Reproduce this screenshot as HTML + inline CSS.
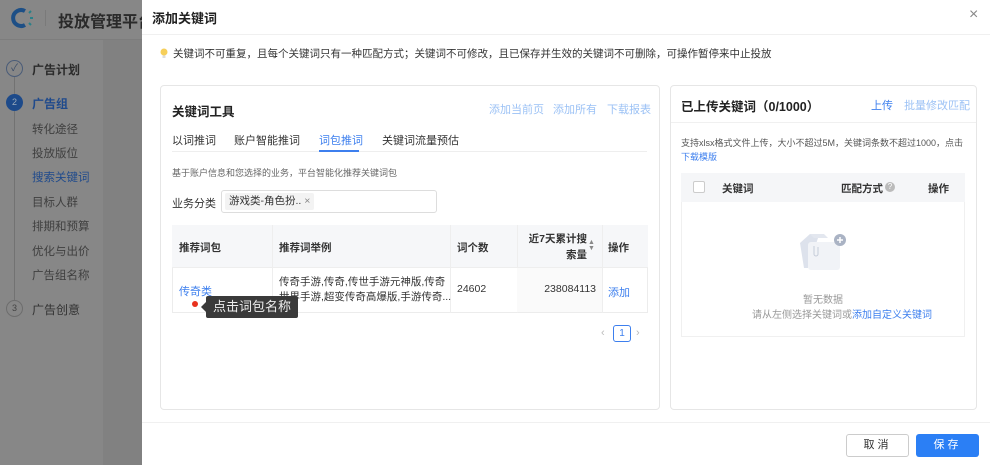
<!DOCTYPE html>
<html><head><meta charset="utf-8">
<style>
*{box-sizing:border-box;margin:0;padding:0}
body{width:990px;height:465px;overflow:hidden;position:relative;background:#808080;font-family:"Liberation Sans","Noto Sans CJK SC",sans-serif;color:#333}
.a{position:absolute;white-space:nowrap}
.side{position:absolute;left:0;top:0;width:103px;height:465px;background:#878787}
.main{position:absolute;left:103px;top:40px;width:40px;height:425px;background:#818181}
.hdr{position:absolute;left:0;top:0;width:142px;height:40px;background:#878787;border-bottom:1px solid #7d7d7d}
.st{color:#2b2b2b;font-size:12px}
.sub{color:#3f3f3f;font-size:11.5px;left:32px}
.drawer{position:absolute;left:142px;top:0;width:848px;height:465px;background:#fff}
.card{position:absolute;border:1px solid #e6e6e6;border-radius:4px;background:#fff}
.blue{color:#3d7fee}
.lb{color:#9cc2f5}
</style></head><body>
<div class="side"></div>
<div class="main"></div>
<div class="hdr"></div>
<svg class="a" style="left:10px;top:7px" width="26" height="22" viewBox="0 0 26 22">
<path d="M15 4 A8 8 0 1 0 15 18" stroke="#1d4f86" stroke-width="4" fill="none"/>
<g stroke="#2a8088" stroke-width="2"><path d="M19 6l2-2M20 11h3M19 16l2 2"/></g></svg>
<div class="a" style="left:45px;top:10px;width:1px;height:16px;background:#7a7a7a"></div>
<div class="a" style="left:58px;top:8px;font-size:16px;font-weight:bold;color:#2a2a2a">投放管理平台</div>
<div class="a" style="left:14px;top:68px;width:1px;height:240px;background:#727272"></div>
<div class="a" style="left:6px;top:60px;width:17px;height:17px;border-radius:50%;border:1px solid #4a5c78;background:#878787;color:#3a4c68;font-size:10px;text-align:center;line-height:15px">✓</div>
<div class="a st" style="left:32px;top:61px;font-weight:bold">广告计划</div>
<div class="a" style="left:6px;top:94px;width:17px;height:17px;border-radius:50%;background:#1d4a8a;color:#9ab;font-size:9px;text-align:center;line-height:17px">2</div>
<div class="a st" style="left:32px;top:95px;color:#1f4a8c;font-weight:bold">广告组</div>
<div class="a sub" style="top:121px">转化途径</div>
<div class="a sub" style="top:145px">投放版位</div>
<div class="a sub" style="top:169px;color:#1f4a8c">搜索关键词</div>
<div class="a sub" style="top:194px">目标人群</div>
<div class="a sub" style="top:218px">排期和预算</div>
<div class="a sub" style="top:243px">优化与出价</div>
<div class="a sub" style="top:267px">广告组名称</div>
<div class="a" style="left:6px;top:300px;width:17px;height:17px;border-radius:50%;border:1px solid #6d6d6d;background:#878787;color:#444;font-size:9px;text-align:center;line-height:15px">3</div>
<div class="a st" style="left:32px;top:301px;color:#333">广告创意</div>

<div class="drawer">
<div class="a" style="left:10px;top:8px;font-size:13px;font-weight:bold;color:#222">添加关键词</div>
<div class="a" style="left:827px;top:6px;font-size:16px;color:#888">×</div>
<div class="a" style="left:0;top:34px;width:848px;height:1px;background:#f0f0f0"></div>
<svg class="a" style="left:18px;top:48px" width="8" height="11" viewBox="0 0 8 11"><circle cx="4" cy="4" r="3.5" fill="#f6cf5a"/><rect x="2.5" y="7.5" width="3" height="2.5" fill="#ddd"/></svg>
<div class="a" style="left:31px;top:46px;font-size:10.5px;color:#333">关键词不可重复，且每个关键词只有一种匹配方式；关键词不可修改，且已保存并生效的关键词不可删除，可操作暂停来中止投放</div>

<div class="card" style="left:18px;top:85px;width:500px;height:325px"></div>
<div class="a" style="left:30px;top:101px;font-size:12.5px;font-weight:bold;color:#222">关键词工具</div>
<div class="a lb" style="left:347px;top:101px;font-size:11px">添加当前页</div>
<div class="a lb" style="left:411px;top:101px;font-size:11px">添加所有</div>
<div class="a lb" style="left:465px;top:101px;font-size:11px">下载报表</div>
<div class="a" style="left:30px;top:132px;font-size:11px">以词推词</div>
<div class="a" style="left:92px;top:132px;font-size:11px">账户智能推词</div>
<div class="a blue" style="left:177px;top:132px;font-size:11px">词包推词</div>
<div class="a" style="left:240px;top:132px;font-size:11px">关键词流量预估</div>
<div class="a" style="left:30px;top:151px;width:475px;height:1px;background:#eee"></div>
<div class="a" style="left:177px;top:150px;width:40px;height:2px;background:#3d7fee"></div>
<div class="a" style="left:30px;top:166px;font-size:9px;color:#666">基于账户信息和您选择的业务，平台智能化推荐关键词包</div>
<div class="a" style="left:30px;top:195px;font-size:11px">业务分类</div>
<div class="a" style="left:79px;top:190px;width:216px;height:23px;border:1px solid #ddd;border-radius:3px"></div>
<div class="a" style="left:83px;top:193px;height:17px;background:#f3f3f3;border-radius:2px;padding:0 4px;font-size:10.5px;line-height:17px">游戏类-角色扮.. <span style="color:#888">×</span></div>
<div class="a" style="left:30px;top:225px;width:476px;height:88px;border:1px solid #ececec"></div>
<div class="a" style="left:30px;top:225px;width:476px;height:43px;background:#f6f7f9;border-bottom:1px solid #eee"></div>
<div class="a" style="left:130px;top:225px;width:1px;height:88px;background:#eee"></div>
<div class="a" style="left:308px;top:225px;width:1px;height:88px;background:#eee"></div>
<div class="a" style="left:375px;top:225px;width:1px;height:88px;background:#eee"></div>
<div class="a" style="left:460px;top:225px;width:1px;height:88px;background:#eee"></div>
<div class="a" style="left:375px;top:268px;width:85px;height:44px;background:#fafafa"></div>
<div class="a" style="left:37px;top:240px;font-size:10.5px;font-weight:bold">推荐词包</div>
<div class="a" style="left:137px;top:240px;font-size:10.5px;font-weight:bold">推荐词举例</div>
<div class="a" style="left:315px;top:240px;font-size:10.5px;font-weight:bold">词个数</div>
<div class="a" style="left:385px;top:231px;font-size:10.5px;font-weight:bold;text-align:right;width:60px;line-height:16px;white-space:normal">近7天累计搜索量</div>
<div class="a" style="left:446px;top:240px;font-size:7px;color:#888;line-height:6px">▲<br>▼</div>
<div class="a" style="left:466px;top:240px;font-size:10.5px;font-weight:bold">操作</div>
<div class="a blue" style="left:37px;top:283px;font-size:11px">传奇类</div>
<div class="a" style="left:137px;top:275px;font-size:10.5px;line-height:15px">传奇手游,传奇,传世手游元神版,传奇<br>世界手游,超变传奇高爆版,手游传奇...</div>
<div class="a" style="left:315px;top:283px;font-size:10.5px">24602</div>
<div class="a" style="left:375px;top:283px;width:79px;text-align:right;font-size:10.5px">238084113</div>
<div class="a blue" style="left:466px;top:284px;font-size:11px">添加</div>
<div class="a" style="left:50px;top:301px;width:6px;height:6px;border-radius:50%;background:#e8321e"></div>
<div class="a" style="left:64px;top:296px;background:#3a3a3a;color:#eee;font-size:13px;padding:1px 7px;height:22px;line-height:20px;border-radius:2px">点击词包名称</div>
<div class="a" style="left:59px;top:302px;width:0;height:0;border:5px solid transparent;border-right-color:#3a3a3a;border-left:0"></div>
<div class="a" style="left:459px;top:327px;font-size:11px;color:#bbb">‹</div>
<div class="a blue" style="left:471px;top:325px;width:18px;height:17px;border:1px solid #3d7fee;border-radius:3px;font-size:10px;text-align:center;line-height:15px">1</div>
<div class="a" style="left:494px;top:327px;font-size:11px;color:#bbb">›</div>

<div class="card" style="left:528px;top:85px;width:307px;height:325px"></div>
<div class="a" style="left:539px;top:96px;font-size:12.5px;font-weight:bold;color:#222">已上传关键词（0/1000）</div>
<div class="a blue" style="left:729px;top:97px;font-size:11px">上传</div>
<div class="a lb" style="left:762px;top:97px;font-size:11px">批量修改匹配</div>
<div class="a" style="left:529px;top:122px;width:305px;height:1px;background:#f0f0f0"></div>
<div class="a" style="left:539px;top:136px;font-size:9px;color:#555">支持xlsx格式文件上传，大小不超过5M，关键词条数不超过1000，点击</div>
<div class="a blue" style="left:539px;top:150px;font-size:9px">下载模版</div>
<div class="a" style="left:539px;top:173px;width:284px;height:164px;border:1px solid #f0f0f0"></div>
<div class="a" style="left:539px;top:173px;width:284px;height:29px;background:#f5f6f8"></div>
<div class="a" style="left:551px;top:181px;width:12px;height:12px;border:1px solid #ccc;border-radius:2px;background:#fff"></div>
<div class="a" style="left:580px;top:181px;font-size:10.5px;font-weight:bold">关键词</div>
<div class="a" style="left:699px;top:181px;font-size:10.5px;font-weight:bold">匹配方式</div>
<div class="a" style="left:743px;top:182px;width:10px;height:10px;border-radius:50%;background:#bbb;color:#fff;font-size:8px;text-align:center;line-height:10px">?</div>
<div class="a" style="left:786px;top:181px;font-size:10.5px;font-weight:bold">操作</div>
<svg class="a" style="left:648px;top:228px" width="60" height="50" viewBox="0 0 60 50">
<path d="M10 15 L20 6 L28 10 L18 40 L14 40Z" fill="#dde2ec"/>
<rect x="18" y="14" width="32" height="28" rx="3" fill="#f1f3f7"/>
<path d="M20 6 h14 l4 4 h-14z" fill="#e3e7ef"/>
<path d="M24 18 v8 a2 2 0 0 0 4 0 v-7" stroke="#c5ccd9" fill="none"/>
<circle cx="50" cy="12" r="6" fill="#aab3c4"/><path d="M47 12h6M50 9v6" stroke="#fff" stroke-width="1.5"/>
</svg>
<div class="a" style="left:661px;top:291px;font-size:10px;color:#999">暂无数据</div>
<div class="a" style="left:610px;top:306px;font-size:10px;color:#999">请从左侧选择关键词或<span class="blue">添加自定义关键词</span></div>

<div class="a" style="left:0;top:422px;width:848px;height:1px;background:#f0f0f0"></div>
<div class="a" style="left:704px;top:434px;width:63px;height:23px;border:1px solid #ccc;border-radius:3px;font-size:11px;text-align:center;line-height:21px;letter-spacing:3px">取消</div>
<div class="a" style="left:774px;top:434px;width:63px;height:23px;background:#2b7ff5;border-radius:3px;color:#fff;font-size:11px;text-align:center;line-height:23px;letter-spacing:3px">保存</div>
</div>
</body></html>
